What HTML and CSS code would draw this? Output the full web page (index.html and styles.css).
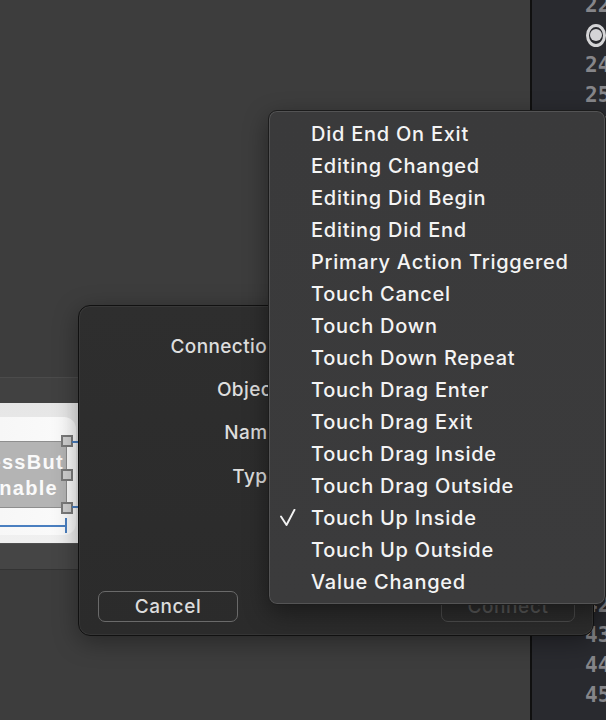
FILE: index.html
```html
<!DOCTYPE html>
<html>
<head>
<meta charset="utf-8">
<link rel="stylesheet" href="styles.css">
</head>
<body>
<div class="app">
  <div class="canvas">
    <div class="strip">
      <div class="strip-top"></div>
      <div class="scene">
        <div class="card">
          <div class="btn">
            <span class="btn-line l1">ProgressBut</span>
            <span class="btn-line l2">Enable</span>
            <span class="handle h-top"></span>
            <span class="handle h-mid"></span>
            <span class="handle h-bot"></span>
            <span class="tick t-top"></span>
            <span class="tick t-bot"></span>
          </div>
          <div class="guide"><span class="guide-end"></span></div>
        </div>
      </div>
      <div class="strip-bottom"></div>
    </div>
  </div>
  <div class="divider"></div>
  <div class="editor">
    <div class="gutter">
      <div class="ln">22</div>
      <div class="ln"><span class="conn"></span></div>
      <div class="ln">24</div><div class="ln">25</div><div class="ln">26</div><div class="ln">27</div>
      <div class="ln">28</div><div class="ln">29</div><div class="ln">30</div><div class="ln">31</div>
      <div class="ln">32</div><div class="ln">33</div><div class="ln">34</div><div class="ln">35</div>
      <div class="ln">36</div><div class="ln">37</div><div class="ln">38</div><div class="ln">39</div>
      <div class="ln">40</div><div class="ln">41</div><div class="ln">42</div><div class="ln">43</div>
      <div class="ln">44</div><div class="ln">45</div>
    </div>
  </div>

  <div class="sheet">
    <div class="form">
      <div class="row"><span class="label">Connection</span></div>
      <div class="row"><span class="label">Object</span></div>
      <div class="row"><span class="label">Name</span></div>
      <div class="row"><span class="label">Type</span></div>
    </div>
    <div class="actions">
      <button class="pbtn">Cancel</button>
      <button class="pbtn disabled">Connect</button>
    </div>
  </div>

  <div class="menu">
    <div class="item"><span class="chk"></span>Did End On Exit</div>
    <div class="item"><span class="chk"></span>Editing Changed</div>
    <div class="item"><span class="chk"></span>Editing Did Begin</div>
    <div class="item"><span class="chk"></span>Editing Did End</div>
    <div class="item"><span class="chk"></span>Primary Action Triggered</div>
    <div class="item"><span class="chk"></span>Touch Cancel</div>
    <div class="item"><span class="chk"></span>Touch Down</div>
    <div class="item"><span class="chk"></span>Touch Down Repeat</div>
    <div class="item"><span class="chk"></span>Touch Drag Enter</div>
    <div class="item"><span class="chk"></span>Touch Drag Exit</div>
    <div class="item"><span class="chk"></span>Touch Drag Inside</div>
    <div class="item"><span class="chk"></span>Touch Drag Outside</div>
    <div class="item"><span class="chk"><svg width="16" height="18" viewBox="0 0 16 18"><polyline points="1,7.5 6.5,16 14.5,0.8" fill="none" stroke="#f2f2f2" stroke-width="1.9" stroke-linecap="round" stroke-linejoin="round"/></svg></span>Touch Up Inside</div>
    <div class="item"><span class="chk"></span>Touch Up Outside</div>
    <div class="item"><span class="chk"></span>Value Changed</div>
  </div>
</div>
</body>
</html>
```

FILE: styles.css
```css
* { box-sizing: border-box; }
html, body {
  margin: 0;
  padding: 0;
  background: #3c3c3c;
}
.app {
  position: relative;
  width: 606px;
  height: 720px;
  overflow: hidden;
  display: flex;
  font-family: Inter, "Noto Sans", sans-serif;
}
.canvas {
  width: 530px;
  flex: none;
  background: #3d3d3d;
  display: flex;
  flex-direction: column;
}
.strip {
  margin-top: 377px;
  display: flex;
  flex-direction: column;
}
.strip-top {
  height: 26px;
  background: #414141;
  border-top: 1px solid #4b4b4b;
}
.scene {
  height: 140px;
  background: linear-gradient(#e6e6e6, #f0f0f0);
  padding-top: 14px;
}
.card {
  position: relative;
  width: 76px;
  height: 118px;
  background: linear-gradient(90deg, #f7f7f7, #fbfbfb);
  border-radius: 0 12px 12px 0;
  padding-top: 24px;
}
.btn {
  position: relative;
  width: 67px;
  height: 67px;
  background: #b4b4b4;
  border-top: 1px solid #8e8e8e;
  border-bottom: 1px solid #8e8e8e;
  border-right: 1px solid #8a8a8a;
  display: flex;
  flex-direction: column;
  justify-content: center;
  overflow: visible;
  font-family: "Liberation Sans", Arial, sans-serif;
  font-weight: bold;
  font-size: 20px;
  letter-spacing: 1.3px;
  color: #fafafa;
  line-height: 26px;
}
.btn-line {
  display: block;
  white-space: nowrap;
  overflow: hidden;
  direction: rtl;
  text-align: right;
}
.l1 { padding-right: 2px; }
.l2 { padding-right: 8px; }
.handle {
  position: absolute;
  right: -7px;
  width: 12px;
  height: 12px;
  background: #cfcfcf;
  border: 2px solid #7a7a7a;
}
.h-top { top: -7px; }
.h-mid { top: 27px; }
.h-bot { bottom: -7px; }
.tick {
  position: absolute;
  left: 72px;
  width: 6px;
  height: 2px;
  background: #4a7fc0;
}
.t-top { top: -1px; }
.t-bot { bottom: -1px; }
.guide {
  position: relative;
  margin-top: 17px;
  width: 67px;
  height: 2px;
  background: #4a7fc0;
}
.guide-end {
  position: absolute;
  right: 0;
  top: -7px;
  width: 2px;
  height: 15px;
  background: #4a7fc0;
}
.strip-bottom {
  height: 27px;
  background: #454545;
  border-top: 1px solid #505050;
  border-bottom: 1px solid #333;
}
.divider {
  width: 2px;
  flex: none;
  background: #101010;
}
.editor {
  flex: 1;
  background: #292a2f;
  overflow: hidden;
}
.gutter {
  margin-top: -10px;
  padding-left: 53px;
  font-family: "DejaVu Sans Mono", monospace;
  font-size: 21px;
  font-weight: bold;
  color: #858589;
}
.ln {
  height: 30px;
  line-height: 30px;
  white-space: nowrap;
  display: flex;
  align-items: center;
}
.conn {
  width: 23px;
  height: 23px;
  border-radius: 50%;
  border: 3px solid #d4d4d6;
  display: flex;
  align-items: center;
  justify-content: center;
  margin-left: 1px;
}
.conn::after {
  content: "";
  width: 12px;
  height: 12px;
  border-radius: 50%;
  background: #d4d4d6;
}

/* Sheet dialog */
.sheet {
  position: absolute;
  left: 78px;
  top: 305px;
  width: 516px;
  height: 331px;
  background: linear-gradient(#2e2e2e, #2b2b2b);
  border: 1px solid #111;
  border-radius: 12px;
  box-shadow: 0 0 0 1px rgba(255,255,255,0.05) inset, 0 6px 24px rgba(0,0,0,0.35);
  padding: 18px 18px 13px 19px;
  display: flex;
  flex-direction: column;
  justify-content: space-between;
}
.form {
  display: flex;
  flex-direction: column;
}
.row {
  height: 44px;
  display: flex;
  align-items: center;
  width: 181px;
  justify-content: flex-end;
}
.row:nth-child(2) { height: 42px; }
.label {
  font-size: 19px;
  color: #dedede;
  letter-spacing: 0.4px;
  font-weight: 500;
}
.actions {
  display: flex;
  justify-content: space-between;
}
.pbtn {
  width: 140px;
  height: 31px;
  border: 1.5px solid #6a6a6a;
  border-radius: 7px;
  background: transparent;
  font-family: Inter, "Noto Sans", sans-serif;
  font-size: 19px;
  font-weight: 500;
  letter-spacing: 0.6px;
  color: #dcdcdc;
  padding: 0;
  line-height: 28px;
}
.pbtn.disabled {
  width: 134px;
  border-color: #4a4a4a;
  color: #575757;
}

/* Popup menu */
.menu {
  position: absolute;
  left: 268px;
  top: 110px;
  width: 338px;
  height: 495px;
  background: linear-gradient(#3a3a3b, #3b3b3c);
  border: 1px solid #1c1c1c;
  border-radius: 9px;
  box-shadow: inset 0 0 0 1px rgba(255,255,255,0.13), 0 8px 24px rgba(0,0,0,0.4);
  padding: 7px 0;
}
.item {
  height: 32px;
  display: flex;
  align-items: center;
  padding-left: 11px;
  font-size: 20px;
  font-weight: 500;
  color: #f4f4f4;
  letter-spacing: 0.75px;
  white-space: nowrap;
}
.chk {
  width: 31px;
  height: 18px;
  flex: none;
  display: flex;
  align-items: center;
}
.chk svg { display: block; margin-top: -1px; }
```
